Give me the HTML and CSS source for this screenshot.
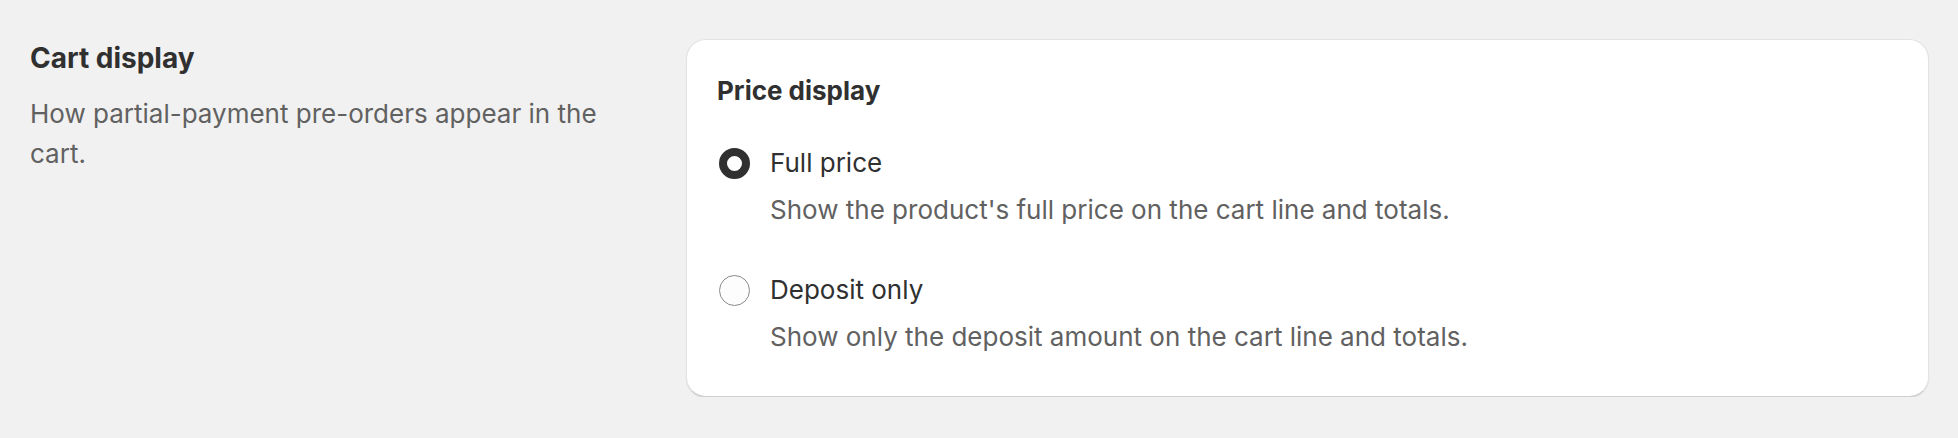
FILE: index.html
```html
<!DOCTYPE html>
<html lang="en">
<head>
<meta charset="utf-8">
<title>Cart display</title>
<link rel="stylesheet" href="styles.css">
</head>
<body>
<div class="section">
  <div class="annotation">
    <h2 class="annotation-title">Cart display</h2>
    <p class="annotation-text">How partial-payment pre-orders appear in the cart.</p>
  </div>
  <div class="card">
    <h3 class="card-title">Price display</h3>
    <div class="choices">
      <label class="choice">
        <span class="choice-row">
          <span class="radio radio-checked"></span>
          <span class="choice-label">Full price</span>
        </span>
        <span class="choice-help">Show the product's full price on the cart line and totals.</span>
      </label>
      <label class="choice">
        <span class="choice-row">
          <span class="radio"></span>
          <span class="choice-label">Deposit only</span>
        </span>
        <span class="choice-help">Show only the deposit amount on the cart line and totals.</span>
      </label>
    </div>
  </div>
</div>
</body>
</html>
```
FILE: styles.css
```css
* { box-sizing: border-box; }
html, body {
  margin: 0;
  padding: 0;
  background: #f1f1f1;
}
body {
  font-family: Inter, "Noto Sans", "Liberation Sans", sans-serif;
  color: #303030;
  -webkit-font-smoothing: antialiased;
}
.section {
  display: flex;
  align-items: flex-start;
  gap: 56px;
  padding: 39px 29px 0 30px;
}
.annotation {
  width: 600px;
  flex: none;
  padding-top: 3px;
}
.annotation-title {
  margin: 0;
  font-size: 28px;
  line-height: 32px;
  font-weight: 650;
  color: #303030;
}
.annotation-text {
  margin: 20px 0 0;
  font-size: 26px;
  line-height: 40px;
  font-weight: 400;
  color: #616161;
}
.card {
  flex: 1;
  background: #ffffff;
  border-radius: 20px;
  border: 1px solid #e3e3e3;
  border-bottom-color: #cfcfcf;
  box-shadow: 0 1px 1px rgba(0, 0, 0, 0.1);
  padding: 35px 31px 43px 30px;
}
.card-title {
  margin: 0;
  font-size: 26px;
  line-height: 32px;
  font-weight: 650;
  color: #303030;
}
.choices {
  display: flex;
  flex-direction: column;
  gap: 48px;
  margin-top: 40px;
}
.choice {
  display: flex;
  flex-direction: column;
  gap: 15px;
}
.choice-row {
  display: flex;
  align-items: center;
  gap: 20px;
  height: 32px;
}
.radio {
  width: 31px;
  height: 31px;
  border-radius: 50%;
  border: 1.5px solid #8a8a8a;
  background: #fdfdfd;
  flex: none;
  margin-left: 2px;
}
.radio-checked {
  border: 8px solid #303030;
  background: #ffffff;
}
.choice-label {
  font-size: 26px;
  line-height: 32px;
  font-weight: 400;
  color: #303030;
}
.choice-help {
  padding-left: 53px;
  font-size: 26px;
  line-height: 32px;
  color: #616161;
}
```
